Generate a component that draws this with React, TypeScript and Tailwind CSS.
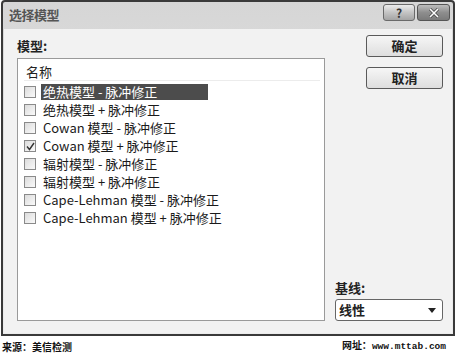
const items = [
  { label: '绝热模型 - 脉冲修正', checked: false },
  { label: '绝热模型 + 脉冲修正', checked: false },
  { label: 'Cowan 模型 - 脉冲修正', checked: false },
  { label: 'Cowan 模型 + 脉冲修正', checked: true },
  { label: '辐射模型 - 脉冲修正', checked: false },
  { label: '辐射模型 + 脉冲修正', checked: false },
  { label: 'Cape-Lehman 模型 - 脉冲修正', checked: false },
  { label: 'Cape-Lehman 模型 + 脉冲修正', checked: false },
];

const font = "font-['Noto_Sans_CJK_SC','Noto_Sans',sans-serif]";

function CheckBox({ checked }: { checked: boolean }) {
  return (
    <div className="w-[12px] h-[12px] border border-[#8a8a8a] bg-gradient-to-br from-[#dcdcdc] to-[#fafafa] flex items-center justify-center">
      {checked && (
        <svg width="9" height="9" viewBox="0 0 9 9">
          <path d="M1 4.5 L3.5 7.5 L8 1" fill="none" stroke="#333" strokeWidth="1.4" />
        </svg>
      )}
    </div>
  );
}

function DialogButton({ label }: { label: string }) {
  return (
    <div className="w-[77px] h-[22px] rounded-[3px] border border-[#5a5a5a] bg-gradient-to-b from-[#f6f6f6] to-[#dedede] flex items-center justify-center text-[13px] font-bold text-[#222]">
      {label}
    </div>
  );
}

export default function App() {
  return (
    <div className={`w-[456px] h-[356px] bg-white flex flex-col ${font}`}>
      <div className="h-[336px] mx-[1px] border-2 border-[#3a3a3a] rounded-t-[4px] bg-gradient-to-b from-[#d6d6d6] to-[#ececec] flex flex-col">
        {/* title bar */}
        <div className="h-[27px] flex items-start pl-[6px] pr-[3px] pt-[1px]">
          <div className="text-[13px] leading-[20px] text-[#555] font-bold tracking-[-0.5px] pt-[2px]">选择模型</div>
          <div className="ml-auto flex gap-[2px] pt-[1px]">
            <div className="h-[17px] w-[32px] rounded-[3px] border border-[#6a6a6a] bg-gradient-to-b from-[#ececec] via-[#c4c4c4] to-[#a4a4a4] flex items-center justify-center">
              <span className="text-[12px] font-bold text-[#333] leading-none">?</span>
            </div>
            <div className="h-[17px] w-[33px] rounded-[3px] border border-[#555] bg-gradient-to-b from-[#bdbdbd] via-[#8e8e8e] to-[#7a7a7a] flex items-center justify-center">
              <svg width="12" height="10" viewBox="0 0 12 10">
                <path d="M2 1 L10 9 M10 1 L2 9" stroke="#444" strokeWidth="3" />
                <path d="M2 1 L10 9 M10 1 L2 9" stroke="#fff" strokeWidth="1.6" />
              </svg>
            </div>
          </div>
        </div>
        {/* body */}
        <div className="flex-1 bg-[#f2f2f2] mx-[1px] mb-[1px] flex pl-[13px] pt-[9px] pb-[12px]">
          <div className="flex flex-col w-[308px]">
            <div className="text-[13px] font-bold leading-[16px] text-[#222]">模型:</div>
            <div className="mt-[4px] flex-1 border border-[#9a9a9a] bg-white flex flex-col pl-[6px]">
              <div className="h-[22px] flex items-center text-[13px] text-[#222] border-b border-[#ececec] mr-[4px] pl-[2px] pt-[4px]">名称</div>
              <div className="flex flex-col pt-[2px]">
                {items.map((it, i) => (
                  <div key={i} className="h-[18px] flex items-center">
                    <CheckBox checked={it.checked} />
                    <div
                      className={`ml-[5px] h-[16px] flex items-center text-[13px] leading-[16px] whitespace-nowrap pl-[2px] ${
                        i === 0 ? 'bg-[#4c4c4c] text-white w-[167px]' : 'text-[#1a1a1a]'
                      }`}
                    >
                      {it.label}
                    </div>
                  </div>
                ))}
              </div>
            </div>
          </div>
          <div className="flex flex-col flex-1 pl-[10px]">
            <div className="flex flex-col gap-[10px] pl-[31px] -mt-[3px]">
              <DialogButton label="确定" />
              <DialogButton label="取消" />
            </div>
            <div className="mt-auto">
              <div className="text-[13px] font-bold leading-[16px] text-[#222]">基线:</div>
              <div className="mt-[3px] w-[108px] h-[22px] rounded-[3px] border border-[#666] bg-white flex items-center pl-[3px] pr-[6px] text-[13px] font-bold text-[#222]">
                线性
                <svg className="ml-auto" width="8" height="5" viewBox="0 0 8 5">
                  <path d="M0 0 L8 0 L4 5 Z" fill="#222" />
                </svg>
              </div>
            </div>
          </div>
        </div>
      </div>
      <div className="flex-1 flex items-center justify-between pl-[2px] pr-[10px] text-[10px] font-bold text-[#111]">
        <span>来源：美信检测</span>
        <span className="font-['Liberation_Mono','Noto_Sans_CJK_SC',monospace] text-[9.5px]">
          <span className="font-['Noto_Sans_CJK_SC',sans-serif] text-[10px]">网址：</span>www.mttab.com
        </span>
      </div>
    </div>
  );
}
